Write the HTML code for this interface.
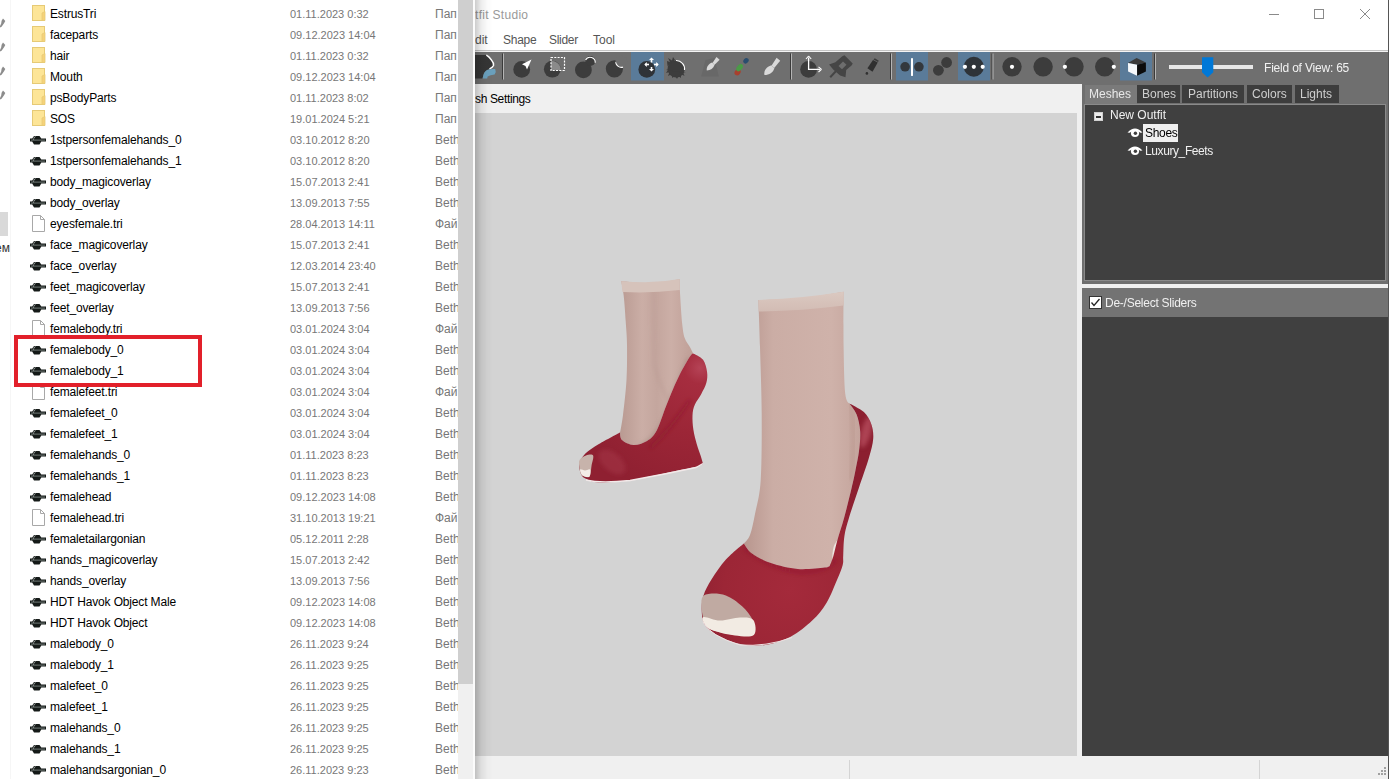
<!DOCTYPE html>
<html><head><meta charset="utf-8">
<style>
*{margin:0;padding:0;box-sizing:border-box}
html,body{width:1389px;height:779px;overflow:hidden;background:#fff;font-family:"Liberation Sans",sans-serif}
.a{position:absolute}
#os{position:absolute;left:475px;top:0;width:914px;height:779px;background:#fff;overflow:hidden}
#ex{position:absolute;left:0;top:0;width:475px;height:779px;background:#fff;overflow:hidden}
.row{position:absolute;left:0;width:458px;height:21px;font-size:12px;white-space:nowrap}
.row .n{position:absolute;left:50px;top:4px;color:#000;letter-spacing:-0.15px}
.row .d{position:absolute;left:290px;top:5px;font-size:11px;color:#777}
.row .t{position:absolute;left:435px;top:4px;color:#777;font-size:12px}
.fold{position:absolute;left:32px;top:2px}
.file{position:absolute;left:32px;top:2px}
.nif{position:absolute;left:30px;top:6px}
</style></head><body>
<div id="ex">
 <div class="a" style="left:10px;top:0;width:1px;height:779px;background:#f6f6f6"></div>
 <div class="row" style="top:3px"><svg class="fold" width="14" height="16" viewBox="0 0 14 16"><rect x="0.5" y="0.5" width="12" height="15" fill="#fde597" stroke="#e6ca76" stroke-width="1"/><path d="M10 8 L13 6.5 L13 15.5 L10 15.5 Z" fill="#f6d27a" stroke="#e6ca76" stroke-width="0.8"/></svg><span class="n">EstrusTri</span><span class="d">01.11.2023 0:32</span><span class="t">Пап</span></div>
<div class="row" style="top:24px"><svg class="fold" width="14" height="16" viewBox="0 0 14 16"><rect x="0.5" y="0.5" width="12" height="15" fill="#fde597" stroke="#e6ca76" stroke-width="1"/><path d="M10 8 L13 6.5 L13 15.5 L10 15.5 Z" fill="#f6d27a" stroke="#e6ca76" stroke-width="0.8"/></svg><span class="n">faceparts</span><span class="d">09.12.2023 14:04</span><span class="t">Пап</span></div>
<div class="row" style="top:45px"><svg class="fold" width="14" height="16" viewBox="0 0 14 16"><rect x="0.5" y="0.5" width="12" height="15" fill="#fde597" stroke="#e6ca76" stroke-width="1"/><path d="M10 8 L13 6.5 L13 15.5 L10 15.5 Z" fill="#f6d27a" stroke="#e6ca76" stroke-width="0.8"/></svg><span class="n">hair</span><span class="d">01.11.2023 0:32</span><span class="t">Пап</span></div>
<div class="row" style="top:66px"><svg class="fold" width="14" height="16" viewBox="0 0 14 16"><rect x="0.5" y="0.5" width="12" height="15" fill="#fde597" stroke="#e6ca76" stroke-width="1"/><path d="M10 8 L13 6.5 L13 15.5 L10 15.5 Z" fill="#f6d27a" stroke="#e6ca76" stroke-width="0.8"/></svg><span class="n">Mouth</span><span class="d">09.12.2023 14:04</span><span class="t">Пап</span></div>
<div class="row" style="top:87px"><svg class="fold" width="14" height="16" viewBox="0 0 14 16"><rect x="0.5" y="0.5" width="12" height="15" fill="#fde597" stroke="#e6ca76" stroke-width="1"/><path d="M10 8 L13 6.5 L13 15.5 L10 15.5 Z" fill="#f6d27a" stroke="#e6ca76" stroke-width="0.8"/></svg><span class="n">psBodyParts</span><span class="d">01.11.2023 8:02</span><span class="t">Пап</span></div>
<div class="row" style="top:108px"><svg class="fold" width="14" height="16" viewBox="0 0 14 16"><rect x="0.5" y="0.5" width="12" height="15" fill="#fde597" stroke="#e6ca76" stroke-width="1"/><path d="M10 8 L13 6.5 L13 15.5 L10 15.5 Z" fill="#f6d27a" stroke="#e6ca76" stroke-width="0.8"/></svg><span class="n">SOS</span><span class="d">19.01.2024 5:21</span><span class="t">Пап</span></div>
<div class="row" style="top:129px"><svg class="nif" width="16" height="10" viewBox="0 0 16 10"><path d="M0 3.6 L2.2 3.6 L4 0.9 L9.5 0.9 L11.3 3.6 L16 3.6 L16 6.6 L11.3 6.6 L9.5 9.6 L4 9.6 L2.2 6.6 L0 6.6 Z" fill="#151a18"/><path d="M1 5.1 L15 5.1" stroke="#9aa3a0" stroke-width="0.7"/><path d="M3.5 3 L5.5 1.6 M3.2 4.4 L4.2 3.8" stroke="#cfd6d3" stroke-width="0.8"/></svg><span class="n">1stpersonfemalehands_0</span><span class="d">03.10.2012 8:20</span><span class="t">Beth</span></div>
<div class="row" style="top:150px"><svg class="nif" width="16" height="10" viewBox="0 0 16 10"><path d="M0 3.6 L2.2 3.6 L4 0.9 L9.5 0.9 L11.3 3.6 L16 3.6 L16 6.6 L11.3 6.6 L9.5 9.6 L4 9.6 L2.2 6.6 L0 6.6 Z" fill="#151a18"/><path d="M1 5.1 L15 5.1" stroke="#9aa3a0" stroke-width="0.7"/><path d="M3.5 3 L5.5 1.6 M3.2 4.4 L4.2 3.8" stroke="#cfd6d3" stroke-width="0.8"/></svg><span class="n">1stpersonfemalehands_1</span><span class="d">03.10.2012 8:20</span><span class="t">Beth</span></div>
<div class="row" style="top:171px"><svg class="nif" width="16" height="10" viewBox="0 0 16 10"><path d="M0 3.6 L2.2 3.6 L4 0.9 L9.5 0.9 L11.3 3.6 L16 3.6 L16 6.6 L11.3 6.6 L9.5 9.6 L4 9.6 L2.2 6.6 L0 6.6 Z" fill="#151a18"/><path d="M1 5.1 L15 5.1" stroke="#9aa3a0" stroke-width="0.7"/><path d="M3.5 3 L5.5 1.6 M3.2 4.4 L4.2 3.8" stroke="#cfd6d3" stroke-width="0.8"/></svg><span class="n">body_magicoverlay</span><span class="d">15.07.2013 2:41</span><span class="t">Beth</span></div>
<div class="row" style="top:192px"><svg class="nif" width="16" height="10" viewBox="0 0 16 10"><path d="M0 3.6 L2.2 3.6 L4 0.9 L9.5 0.9 L11.3 3.6 L16 3.6 L16 6.6 L11.3 6.6 L9.5 9.6 L4 9.6 L2.2 6.6 L0 6.6 Z" fill="#151a18"/><path d="M1 5.1 L15 5.1" stroke="#9aa3a0" stroke-width="0.7"/><path d="M3.5 3 L5.5 1.6 M3.2 4.4 L4.2 3.8" stroke="#cfd6d3" stroke-width="0.8"/></svg><span class="n">body_overlay</span><span class="d">13.09.2013 7:55</span><span class="t">Beth</span></div>
<div class="row" style="top:213px"><svg class="file" width="13" height="17" viewBox="0 0 13 17"><path d="M0.5 0.5 L8.5 0.5 L12.5 4.5 L12.5 16.5 L0.5 16.5 Z" fill="#fff" stroke="#a8a8a8"/><path d="M8.5 0.5 L8.5 4.5 L12.5 4.5" fill="none" stroke="#a8a8a8"/></svg><span class="n">eyesfemale.tri</span><span class="d">28.04.2013 14:11</span><span class="t">Фай</span></div>
<div class="row" style="top:234px"><svg class="nif" width="16" height="10" viewBox="0 0 16 10"><path d="M0 3.6 L2.2 3.6 L4 0.9 L9.5 0.9 L11.3 3.6 L16 3.6 L16 6.6 L11.3 6.6 L9.5 9.6 L4 9.6 L2.2 6.6 L0 6.6 Z" fill="#151a18"/><path d="M1 5.1 L15 5.1" stroke="#9aa3a0" stroke-width="0.7"/><path d="M3.5 3 L5.5 1.6 M3.2 4.4 L4.2 3.8" stroke="#cfd6d3" stroke-width="0.8"/></svg><span class="n">face_magicoverlay</span><span class="d">15.07.2013 2:41</span><span class="t">Beth</span></div>
<div class="row" style="top:255px"><svg class="nif" width="16" height="10" viewBox="0 0 16 10"><path d="M0 3.6 L2.2 3.6 L4 0.9 L9.5 0.9 L11.3 3.6 L16 3.6 L16 6.6 L11.3 6.6 L9.5 9.6 L4 9.6 L2.2 6.6 L0 6.6 Z" fill="#151a18"/><path d="M1 5.1 L15 5.1" stroke="#9aa3a0" stroke-width="0.7"/><path d="M3.5 3 L5.5 1.6 M3.2 4.4 L4.2 3.8" stroke="#cfd6d3" stroke-width="0.8"/></svg><span class="n">face_overlay</span><span class="d">12.03.2014 23:40</span><span class="t">Beth</span></div>
<div class="row" style="top:276px"><svg class="nif" width="16" height="10" viewBox="0 0 16 10"><path d="M0 3.6 L2.2 3.6 L4 0.9 L9.5 0.9 L11.3 3.6 L16 3.6 L16 6.6 L11.3 6.6 L9.5 9.6 L4 9.6 L2.2 6.6 L0 6.6 Z" fill="#151a18"/><path d="M1 5.1 L15 5.1" stroke="#9aa3a0" stroke-width="0.7"/><path d="M3.5 3 L5.5 1.6 M3.2 4.4 L4.2 3.8" stroke="#cfd6d3" stroke-width="0.8"/></svg><span class="n">feet_magicoverlay</span><span class="d">15.07.2013 2:41</span><span class="t">Beth</span></div>
<div class="row" style="top:297px"><svg class="nif" width="16" height="10" viewBox="0 0 16 10"><path d="M0 3.6 L2.2 3.6 L4 0.9 L9.5 0.9 L11.3 3.6 L16 3.6 L16 6.6 L11.3 6.6 L9.5 9.6 L4 9.6 L2.2 6.6 L0 6.6 Z" fill="#151a18"/><path d="M1 5.1 L15 5.1" stroke="#9aa3a0" stroke-width="0.7"/><path d="M3.5 3 L5.5 1.6 M3.2 4.4 L4.2 3.8" stroke="#cfd6d3" stroke-width="0.8"/></svg><span class="n">feet_overlay</span><span class="d">13.09.2013 7:56</span><span class="t">Beth</span></div>
<div class="row" style="top:318px"><svg class="file" width="13" height="17" viewBox="0 0 13 17"><path d="M0.5 0.5 L8.5 0.5 L12.5 4.5 L12.5 16.5 L0.5 16.5 Z" fill="#fff" stroke="#a8a8a8"/><path d="M8.5 0.5 L8.5 4.5 L12.5 4.5" fill="none" stroke="#a8a8a8"/></svg><span class="n">femalebody.tri</span><span class="d">03.01.2024 3:04</span><span class="t">Фай</span></div>
<div class="row" style="top:339px"><svg class="nif" width="16" height="10" viewBox="0 0 16 10"><path d="M0 3.6 L2.2 3.6 L4 0.9 L9.5 0.9 L11.3 3.6 L16 3.6 L16 6.6 L11.3 6.6 L9.5 9.6 L4 9.6 L2.2 6.6 L0 6.6 Z" fill="#151a18"/><path d="M1 5.1 L15 5.1" stroke="#9aa3a0" stroke-width="0.7"/><path d="M3.5 3 L5.5 1.6 M3.2 4.4 L4.2 3.8" stroke="#cfd6d3" stroke-width="0.8"/></svg><span class="n">femalebody_0</span><span class="d">03.01.2024 3:04</span><span class="t">Beth</span></div>
<div class="row" style="top:360px"><svg class="nif" width="16" height="10" viewBox="0 0 16 10"><path d="M0 3.6 L2.2 3.6 L4 0.9 L9.5 0.9 L11.3 3.6 L16 3.6 L16 6.6 L11.3 6.6 L9.5 9.6 L4 9.6 L2.2 6.6 L0 6.6 Z" fill="#151a18"/><path d="M1 5.1 L15 5.1" stroke="#9aa3a0" stroke-width="0.7"/><path d="M3.5 3 L5.5 1.6 M3.2 4.4 L4.2 3.8" stroke="#cfd6d3" stroke-width="0.8"/></svg><span class="n">femalebody_1</span><span class="d">03.01.2024 3:04</span><span class="t">Beth</span></div>
<div class="row" style="top:381px"><svg class="file" width="13" height="17" viewBox="0 0 13 17"><path d="M0.5 0.5 L8.5 0.5 L12.5 4.5 L12.5 16.5 L0.5 16.5 Z" fill="#fff" stroke="#a8a8a8"/><path d="M8.5 0.5 L8.5 4.5 L12.5 4.5" fill="none" stroke="#a8a8a8"/></svg><span class="n">femalefeet.tri</span><span class="d">03.01.2024 3:04</span><span class="t">Фай</span></div>
<div class="row" style="top:402px"><svg class="nif" width="16" height="10" viewBox="0 0 16 10"><path d="M0 3.6 L2.2 3.6 L4 0.9 L9.5 0.9 L11.3 3.6 L16 3.6 L16 6.6 L11.3 6.6 L9.5 9.6 L4 9.6 L2.2 6.6 L0 6.6 Z" fill="#151a18"/><path d="M1 5.1 L15 5.1" stroke="#9aa3a0" stroke-width="0.7"/><path d="M3.5 3 L5.5 1.6 M3.2 4.4 L4.2 3.8" stroke="#cfd6d3" stroke-width="0.8"/></svg><span class="n">femalefeet_0</span><span class="d">03.01.2024 3:04</span><span class="t">Beth</span></div>
<div class="row" style="top:423px"><svg class="nif" width="16" height="10" viewBox="0 0 16 10"><path d="M0 3.6 L2.2 3.6 L4 0.9 L9.5 0.9 L11.3 3.6 L16 3.6 L16 6.6 L11.3 6.6 L9.5 9.6 L4 9.6 L2.2 6.6 L0 6.6 Z" fill="#151a18"/><path d="M1 5.1 L15 5.1" stroke="#9aa3a0" stroke-width="0.7"/><path d="M3.5 3 L5.5 1.6 M3.2 4.4 L4.2 3.8" stroke="#cfd6d3" stroke-width="0.8"/></svg><span class="n">femalefeet_1</span><span class="d">03.01.2024 3:04</span><span class="t">Beth</span></div>
<div class="row" style="top:444px"><svg class="nif" width="16" height="10" viewBox="0 0 16 10"><path d="M0 3.6 L2.2 3.6 L4 0.9 L9.5 0.9 L11.3 3.6 L16 3.6 L16 6.6 L11.3 6.6 L9.5 9.6 L4 9.6 L2.2 6.6 L0 6.6 Z" fill="#151a18"/><path d="M1 5.1 L15 5.1" stroke="#9aa3a0" stroke-width="0.7"/><path d="M3.5 3 L5.5 1.6 M3.2 4.4 L4.2 3.8" stroke="#cfd6d3" stroke-width="0.8"/></svg><span class="n">femalehands_0</span><span class="d">01.11.2023 8:23</span><span class="t">Beth</span></div>
<div class="row" style="top:465px"><svg class="nif" width="16" height="10" viewBox="0 0 16 10"><path d="M0 3.6 L2.2 3.6 L4 0.9 L9.5 0.9 L11.3 3.6 L16 3.6 L16 6.6 L11.3 6.6 L9.5 9.6 L4 9.6 L2.2 6.6 L0 6.6 Z" fill="#151a18"/><path d="M1 5.1 L15 5.1" stroke="#9aa3a0" stroke-width="0.7"/><path d="M3.5 3 L5.5 1.6 M3.2 4.4 L4.2 3.8" stroke="#cfd6d3" stroke-width="0.8"/></svg><span class="n">femalehands_1</span><span class="d">01.11.2023 8:23</span><span class="t">Beth</span></div>
<div class="row" style="top:486px"><svg class="nif" width="16" height="10" viewBox="0 0 16 10"><path d="M0 3.6 L2.2 3.6 L4 0.9 L9.5 0.9 L11.3 3.6 L16 3.6 L16 6.6 L11.3 6.6 L9.5 9.6 L4 9.6 L2.2 6.6 L0 6.6 Z" fill="#151a18"/><path d="M1 5.1 L15 5.1" stroke="#9aa3a0" stroke-width="0.7"/><path d="M3.5 3 L5.5 1.6 M3.2 4.4 L4.2 3.8" stroke="#cfd6d3" stroke-width="0.8"/></svg><span class="n">femalehead</span><span class="d">09.12.2023 14:08</span><span class="t">Beth</span></div>
<div class="row" style="top:507px"><svg class="file" width="13" height="17" viewBox="0 0 13 17"><path d="M0.5 0.5 L8.5 0.5 L12.5 4.5 L12.5 16.5 L0.5 16.5 Z" fill="#fff" stroke="#a8a8a8"/><path d="M8.5 0.5 L8.5 4.5 L12.5 4.5" fill="none" stroke="#a8a8a8"/></svg><span class="n">femalehead.tri</span><span class="d">31.10.2013 19:21</span><span class="t">Фай</span></div>
<div class="row" style="top:528px"><svg class="nif" width="16" height="10" viewBox="0 0 16 10"><path d="M0 3.6 L2.2 3.6 L4 0.9 L9.5 0.9 L11.3 3.6 L16 3.6 L16 6.6 L11.3 6.6 L9.5 9.6 L4 9.6 L2.2 6.6 L0 6.6 Z" fill="#151a18"/><path d="M1 5.1 L15 5.1" stroke="#9aa3a0" stroke-width="0.7"/><path d="M3.5 3 L5.5 1.6 M3.2 4.4 L4.2 3.8" stroke="#cfd6d3" stroke-width="0.8"/></svg><span class="n">femaletailargonian</span><span class="d">05.12.2011 2:28</span><span class="t">Beth</span></div>
<div class="row" style="top:549px"><svg class="nif" width="16" height="10" viewBox="0 0 16 10"><path d="M0 3.6 L2.2 3.6 L4 0.9 L9.5 0.9 L11.3 3.6 L16 3.6 L16 6.6 L11.3 6.6 L9.5 9.6 L4 9.6 L2.2 6.6 L0 6.6 Z" fill="#151a18"/><path d="M1 5.1 L15 5.1" stroke="#9aa3a0" stroke-width="0.7"/><path d="M3.5 3 L5.5 1.6 M3.2 4.4 L4.2 3.8" stroke="#cfd6d3" stroke-width="0.8"/></svg><span class="n">hands_magicoverlay</span><span class="d">15.07.2013 2:42</span><span class="t">Beth</span></div>
<div class="row" style="top:570px"><svg class="nif" width="16" height="10" viewBox="0 0 16 10"><path d="M0 3.6 L2.2 3.6 L4 0.9 L9.5 0.9 L11.3 3.6 L16 3.6 L16 6.6 L11.3 6.6 L9.5 9.6 L4 9.6 L2.2 6.6 L0 6.6 Z" fill="#151a18"/><path d="M1 5.1 L15 5.1" stroke="#9aa3a0" stroke-width="0.7"/><path d="M3.5 3 L5.5 1.6 M3.2 4.4 L4.2 3.8" stroke="#cfd6d3" stroke-width="0.8"/></svg><span class="n">hands_overlay</span><span class="d">13.09.2013 7:56</span><span class="t">Beth</span></div>
<div class="row" style="top:591px"><svg class="nif" width="16" height="10" viewBox="0 0 16 10"><path d="M0 3.6 L2.2 3.6 L4 0.9 L9.5 0.9 L11.3 3.6 L16 3.6 L16 6.6 L11.3 6.6 L9.5 9.6 L4 9.6 L2.2 6.6 L0 6.6 Z" fill="#151a18"/><path d="M1 5.1 L15 5.1" stroke="#9aa3a0" stroke-width="0.7"/><path d="M3.5 3 L5.5 1.6 M3.2 4.4 L4.2 3.8" stroke="#cfd6d3" stroke-width="0.8"/></svg><span class="n">HDT Havok Object Male</span><span class="d">09.12.2023 14:08</span><span class="t">Beth</span></div>
<div class="row" style="top:612px"><svg class="nif" width="16" height="10" viewBox="0 0 16 10"><path d="M0 3.6 L2.2 3.6 L4 0.9 L9.5 0.9 L11.3 3.6 L16 3.6 L16 6.6 L11.3 6.6 L9.5 9.6 L4 9.6 L2.2 6.6 L0 6.6 Z" fill="#151a18"/><path d="M1 5.1 L15 5.1" stroke="#9aa3a0" stroke-width="0.7"/><path d="M3.5 3 L5.5 1.6 M3.2 4.4 L4.2 3.8" stroke="#cfd6d3" stroke-width="0.8"/></svg><span class="n">HDT Havok Object</span><span class="d">09.12.2023 14:08</span><span class="t">Beth</span></div>
<div class="row" style="top:633px"><svg class="nif" width="16" height="10" viewBox="0 0 16 10"><path d="M0 3.6 L2.2 3.6 L4 0.9 L9.5 0.9 L11.3 3.6 L16 3.6 L16 6.6 L11.3 6.6 L9.5 9.6 L4 9.6 L2.2 6.6 L0 6.6 Z" fill="#151a18"/><path d="M1 5.1 L15 5.1" stroke="#9aa3a0" stroke-width="0.7"/><path d="M3.5 3 L5.5 1.6 M3.2 4.4 L4.2 3.8" stroke="#cfd6d3" stroke-width="0.8"/></svg><span class="n">malebody_0</span><span class="d">26.11.2023 9:24</span><span class="t">Beth</span></div>
<div class="row" style="top:654px"><svg class="nif" width="16" height="10" viewBox="0 0 16 10"><path d="M0 3.6 L2.2 3.6 L4 0.9 L9.5 0.9 L11.3 3.6 L16 3.6 L16 6.6 L11.3 6.6 L9.5 9.6 L4 9.6 L2.2 6.6 L0 6.6 Z" fill="#151a18"/><path d="M1 5.1 L15 5.1" stroke="#9aa3a0" stroke-width="0.7"/><path d="M3.5 3 L5.5 1.6 M3.2 4.4 L4.2 3.8" stroke="#cfd6d3" stroke-width="0.8"/></svg><span class="n">malebody_1</span><span class="d">26.11.2023 9:25</span><span class="t">Beth</span></div>
<div class="row" style="top:675px"><svg class="nif" width="16" height="10" viewBox="0 0 16 10"><path d="M0 3.6 L2.2 3.6 L4 0.9 L9.5 0.9 L11.3 3.6 L16 3.6 L16 6.6 L11.3 6.6 L9.5 9.6 L4 9.6 L2.2 6.6 L0 6.6 Z" fill="#151a18"/><path d="M1 5.1 L15 5.1" stroke="#9aa3a0" stroke-width="0.7"/><path d="M3.5 3 L5.5 1.6 M3.2 4.4 L4.2 3.8" stroke="#cfd6d3" stroke-width="0.8"/></svg><span class="n">malefeet_0</span><span class="d">26.11.2023 9:25</span><span class="t">Beth</span></div>
<div class="row" style="top:696px"><svg class="nif" width="16" height="10" viewBox="0 0 16 10"><path d="M0 3.6 L2.2 3.6 L4 0.9 L9.5 0.9 L11.3 3.6 L16 3.6 L16 6.6 L11.3 6.6 L9.5 9.6 L4 9.6 L2.2 6.6 L0 6.6 Z" fill="#151a18"/><path d="M1 5.1 L15 5.1" stroke="#9aa3a0" stroke-width="0.7"/><path d="M3.5 3 L5.5 1.6 M3.2 4.4 L4.2 3.8" stroke="#cfd6d3" stroke-width="0.8"/></svg><span class="n">malefeet_1</span><span class="d">26.11.2023 9:25</span><span class="t">Beth</span></div>
<div class="row" style="top:717px"><svg class="nif" width="16" height="10" viewBox="0 0 16 10"><path d="M0 3.6 L2.2 3.6 L4 0.9 L9.5 0.9 L11.3 3.6 L16 3.6 L16 6.6 L11.3 6.6 L9.5 9.6 L4 9.6 L2.2 6.6 L0 6.6 Z" fill="#151a18"/><path d="M1 5.1 L15 5.1" stroke="#9aa3a0" stroke-width="0.7"/><path d="M3.5 3 L5.5 1.6 M3.2 4.4 L4.2 3.8" stroke="#cfd6d3" stroke-width="0.8"/></svg><span class="n">malehands_0</span><span class="d">26.11.2023 9:25</span><span class="t">Beth</span></div>
<div class="row" style="top:738px"><svg class="nif" width="16" height="10" viewBox="0 0 16 10"><path d="M0 3.6 L2.2 3.6 L4 0.9 L9.5 0.9 L11.3 3.6 L16 3.6 L16 6.6 L11.3 6.6 L9.5 9.6 L4 9.6 L2.2 6.6 L0 6.6 Z" fill="#151a18"/><path d="M1 5.1 L15 5.1" stroke="#9aa3a0" stroke-width="0.7"/><path d="M3.5 3 L5.5 1.6 M3.2 4.4 L4.2 3.8" stroke="#cfd6d3" stroke-width="0.8"/></svg><span class="n">malehands_1</span><span class="d">26.11.2023 9:25</span><span class="t">Beth</span></div>
<div class="row" style="top:759px"><svg class="nif" width="16" height="10" viewBox="0 0 16 10"><path d="M0 3.6 L2.2 3.6 L4 0.9 L9.5 0.9 L11.3 3.6 L16 3.6 L16 6.6 L11.3 6.6 L9.5 9.6 L4 9.6 L2.2 6.6 L0 6.6 Z" fill="#151a18"/><path d="M1 5.1 L15 5.1" stroke="#9aa3a0" stroke-width="0.7"/><path d="M3.5 3 L5.5 1.6 M3.2 4.4 L4.2 3.8" stroke="#cfd6d3" stroke-width="0.8"/></svg><span class="n">malehandsargonian_0</span><span class="d">26.11.2023 9:23</span><span class="t">Beth</span></div>
 <div class="a" style="left:14px;top:335px;width:188px;height:52px;border:4.5px solid #e2202a"></div>
 <div class="a" style="left:0;top:212px;width:8px;height:24px;background:#d9d9d9"></div>
 <div class="a" style="left:-5px;top:241px;font-size:12px;color:#333">ем</div>
 <svg class="a" style="left:0;top:0" width="10" height="110" viewBox="0 0 10 110"><g fill="#8c8c8c"><path d="M-1 28.0 L1.2 23.5 L1.6 20.7 L3 18.5 L5.3 21.1 L4.2 23.1 L1.6 26.7 Z"/><path d="M-1 52.0 L1.2 47.5 L1.6 44.7 L3 42.5 L5.3 45.1 L4.2 47.1 L1.6 50.7 Z"/><path d="M-1 76.0 L1.2 71.5 L1.6 68.7 L3 66.5 L5.3 69.1 L4.2 71.1 L1.6 74.7 Z"/><path d="M-1 100.0 L1.2 95.5 L1.6 92.7 L3 90.5 L5.3 93.1 L4.2 95.1 L1.6 98.7 Z"/></g></svg>
 <div class="a" style="left:458px;top:0;width:15px;height:779px;background:#f0f0f0"></div><div class="a" style="left:473px;top:0;width:2px;height:779px;background:#fbfbfb"></div>
 <div class="a" style="left:458px;top:0;width:15px;height:684px;background:#cfcfcf"></div>
</div>
<div id="os">
 <div class="a" style="left:0;top:8px;font-size:12px;color:#999;letter-spacing:0.3px">tfit Studio</div>
 <div class="a" style="left:0;top:33px;font-size:12px;color:#555">dit</div>
 <div class="a" style="left:28px;top:33px;font-size:12px;color:#555;letter-spacing:-0.25px">Shape</div>
 <div class="a" style="left:74px;top:33px;font-size:12px;color:#555;letter-spacing:-0.3px">Slider</div>
 <div class="a" style="left:118px;top:33px;font-size:12px;color:#555">Tool</div>
 <div class="a" style="left:0;top:50px;width:914px;height:1px;background:#c4c4c4"></div><div class="a" style="left:0;top:51px;width:914px;height:1px;background:#f4f4f4"></div>
 <div class="a" style="left:0;top:52px;width:914px;height:32px;background:#6f6f6f"></div>
 <div class="a" style="left:0;top:84px;width:607px;height:29px;background:#f0f0f0"></div>
 <div class="a" style="left:0;top:92px;font-size:12px;color:#000;letter-spacing:-0.35px">sh Settings</div>
 <div class="a" style="left:0;top:113px;width:604px;height:644px;background:#d3d3d3"></div>
 <div class="a" style="left:602px;top:84px;width:5px;height:672px;background:#f0f0f0"></div>
 <div class="a" style="left:0;top:756px;width:914px;height:23px;background:#f0f0f0"></div>
 <!-- right panel -->
 <div class="a" style="left:607px;top:84px;width:306px;height:672px;background:#404040"></div>
 <div class="a" style="left:607px;top:84px;width:306px;height:200px;background:#6f6f6f"></div>
 <div class="a" style="left:609px;top:104px;width:302px;height:177px;background:#404040;border:1px solid #8a8a8a"></div>
 <div class="a" style="left:607px;top:284px;width:306px;height:4px;background:#f0f0f0"></div>
 <div class="a" style="left:607px;top:288px;width:306px;height:29px;background:#737373"></div>
 <div class="a" style="left:913px;top:0;width:1px;height:779px;background:#555"></div>
</div>
<svg class="a" style="left:0;top:0" width="1389" height="779" viewBox="0 0 1389 779">
<defs>
<linearGradient id="legL" x1="0" y1="0" x2="1" y2="0">
<stop offset="0" stop-color="#b99a92"/><stop offset="0.3" stop-color="#cbaea6"/><stop offset="0.5" stop-color="#c4a69e"/><stop offset="0.7" stop-color="#ccafa7"/><stop offset="1" stop-color="#bf9f97"/>
</linearGradient>
<linearGradient id="legR" x1="0" y1="0" x2="1" y2="0">
<stop offset="0" stop-color="#b8968e"/><stop offset="0.25" stop-color="#cbada5"/><stop offset="0.75" stop-color="#cfb2aa"/><stop offset="1" stop-color="#c4a49c"/>
</linearGradient>
<radialGradient id="redL" gradientUnits="userSpaceOnUse" cx="700" cy="368" r="130">
<stop offset="0" stop-color="#b54356"/><stop offset="0.12" stop-color="#a62d3f"/><stop offset="0.5" stop-color="#9c2637"/><stop offset="1" stop-color="#8f2031"/>
</radialGradient>
<radialGradient id="redR" gradientUnits="userSpaceOnUse" cx="790" cy="590" r="110">
<stop offset="0" stop-color="#a42a3b"/><stop offset="0.6" stop-color="#9c2636"/><stop offset="1" stop-color="#8c1f30"/>
</radialGradient>
<filter id="sblur" x="-20%" y="-20%" width="140%" height="140%"><feGaussianBlur stdDeviation="2.2"/></filter>
<linearGradient id="bandR" x1="0" y1="0" x2="0" y2="1"><stop offset="0" stop-color="#dbc9c1"/><stop offset="1" stop-color="#d2bcb4"/></linearGradient>
</defs>
<path d="M651.0 283.5 C660.7 283.2 679.6 279.0 679.6 279.0 C679.6 279.0 679.8 288.2 680.2 295.7 C680.6 303.2 681.5 316.8 682.2 323.9 C683.0 330.9 683.4 334.1 684.7 338.0 C686.0 341.9 688.5 344.4 689.9 347.0 C691.3 349.6 693.2 353.5 693.2 353.5 C693.2 353.5 692.0 353.1 689.4 357.3 C686.8 361.5 681.6 370.5 677.8 378.5 C673.9 386.5 669.8 396.8 666.3 405.5 C662.8 414.2 659.9 424.6 656.7 430.5 C653.5 436.4 650.9 438.6 647.0 441.0 C643.1 443.4 637.7 445.1 633.5 445.0 C629.3 444.9 624.2 442.2 622.0 440.1 C619.8 438.0 620.1 432.4 620.1 432.4 C620.1 432.4 621.9 423.7 623.0 415.0 C624.1 406.3 625.8 391.7 626.5 380.0 C627.2 368.3 627.1 354.8 627.0 345.0 C626.9 335.2 626.2 329.5 625.7 321.3 C625.2 313.1 624.5 302.4 623.7 295.7 C623.0 289.0 621.2 280.9 621.2 280.9 C621.2 280.9 641.3 283.8 651.0 283.5 Z" fill="url(#legL)"/>
<clipPath id="cpLL"><path d="M651.0 283.5 C660.7 283.2 679.6 279.0 679.6 279.0 C679.6 279.0 679.8 288.2 680.2 295.7 C680.6 303.2 681.5 316.8 682.2 323.9 C683.0 330.9 683.4 334.1 684.7 338.0 C686.0 341.9 688.5 344.4 689.9 347.0 C691.3 349.6 693.2 353.5 693.2 353.5 C693.2 353.5 692.0 353.1 689.4 357.3 C686.8 361.5 681.6 370.5 677.8 378.5 C673.9 386.5 669.8 396.8 666.3 405.5 C662.8 414.2 659.9 424.6 656.7 430.5 C653.5 436.4 650.9 438.6 647.0 441.0 C643.1 443.4 637.7 445.1 633.5 445.0 C629.3 444.9 624.2 442.2 622.0 440.1 C619.8 438.0 620.1 432.4 620.1 432.4 C620.1 432.4 621.9 423.7 623.0 415.0 C624.1 406.3 625.8 391.7 626.5 380.0 C627.2 368.3 627.1 354.8 627.0 345.0 C626.9 335.2 626.2 329.5 625.7 321.3 C625.2 313.1 624.5 302.4 623.7 295.7 C623.0 289.0 621.2 280.9 621.2 280.9 C621.2 280.9 641.3 283.8 651.0 283.5 Z"/></clipPath>
<g clip-path="url(#cpLL)" filter="url(#sblur)">
<path d="M653 290 L654 365 Q660 385 668 400" stroke="#b0918a" stroke-width="1.5" fill="none" opacity="0.6"/>
<path d="M640 447 Q660 440 672 400 L690 358" stroke="#9a8078" stroke-width="6" fill="none" opacity="0.45"/>
</g>
<path d="M621.2 280.9 Q651 284.5 679.6 279 L679.8 290 Q651 293.5 622.5 292 Z" fill="#d6c3bb"/>
<path d="M693.2 353.5 C693.2 353.5 700.8 356.7 703.1 359.8 C705.4 362.9 706.6 368.4 707.1 372.3 C707.6 376.2 707.3 379.5 706.3 383.1 C705.3 386.7 703.2 390.3 701.3 393.9 C699.4 397.5 696.3 401.1 694.8 404.7 C693.3 408.3 692.7 411.2 692.5 415.4 C692.3 419.6 692.7 425.0 693.4 429.8 C694.1 434.6 695.6 440.0 696.8 444.2 C698.0 448.4 699.3 451.7 700.4 455.0 C701.5 458.3 703.1 463.8 703.1 463.8 C703.1 463.8 701.3 465.6 695.2 467.1 C689.1 468.6 677.5 470.6 666.3 472.9 C655.1 475.1 639.0 479.0 627.8 480.6 C616.6 482.2 606.0 482.8 598.9 482.5 C591.8 482.2 588.4 480.2 585.4 478.6 C582.4 477.0 581.6 475.5 580.6 472.9 C579.6 470.3 578.8 466.4 579.6 463.2 C580.4 460.0 582.2 456.8 585.4 453.6 C588.6 450.4 593.1 447.5 598.9 444.0 C604.7 440.5 620.1 432.4 620.1 432.4 C620.1 432.4 619.8 438.0 622.0 440.1 C624.2 442.2 629.3 444.9 633.5 445.0 C637.7 445.1 643.1 443.4 647.0 441.0 C650.9 438.6 653.5 436.4 656.7 430.5 C659.9 424.6 662.8 414.2 666.3 405.5 C669.8 396.8 673.9 386.5 677.8 378.5 C681.6 370.5 686.8 361.5 689.4 357.3 C692.0 353.1 693.2 353.5 693.2 353.5 Z" fill="url(#redL)"/>
<clipPath id="cpRL"><path d="M693.2 353.5 C693.2 353.5 700.8 356.7 703.1 359.8 C705.4 362.9 706.6 368.4 707.1 372.3 C707.6 376.2 707.3 379.5 706.3 383.1 C705.3 386.7 703.2 390.3 701.3 393.9 C699.4 397.5 696.3 401.1 694.8 404.7 C693.3 408.3 692.7 411.2 692.5 415.4 C692.3 419.6 692.7 425.0 693.4 429.8 C694.1 434.6 695.6 440.0 696.8 444.2 C698.0 448.4 699.3 451.7 700.4 455.0 C701.5 458.3 703.1 463.8 703.1 463.8 C703.1 463.8 701.3 465.6 695.2 467.1 C689.1 468.6 677.5 470.6 666.3 472.9 C655.1 475.1 639.0 479.0 627.8 480.6 C616.6 482.2 606.0 482.8 598.9 482.5 C591.8 482.2 588.4 480.2 585.4 478.6 C582.4 477.0 581.6 475.5 580.6 472.9 C579.6 470.3 578.8 466.4 579.6 463.2 C580.4 460.0 582.2 456.8 585.4 453.6 C588.6 450.4 593.1 447.5 598.9 444.0 C604.7 440.5 620.1 432.4 620.1 432.4 C620.1 432.4 619.8 438.0 622.0 440.1 C624.2 442.2 629.3 444.9 633.5 445.0 C637.7 445.1 643.1 443.4 647.0 441.0 C650.9 438.6 653.5 436.4 656.7 430.5 C659.9 424.6 662.8 414.2 666.3 405.5 C669.8 396.8 673.9 386.5 677.8 378.5 C681.6 370.5 686.8 361.5 689.4 357.3 C692.0 353.1 693.2 353.5 693.2 353.5 Z"/></clipPath>
<g clip-path="url(#cpRL)" filter="url(#sblur)">
<ellipse cx="612" cy="462" rx="9" ry="16" transform="rotate(-50 612 462)" fill="#b24555" opacity="0.35"/>
<path d="M650 448 Q670 430 690 400" stroke="#85192a" stroke-width="3" fill="none" opacity="0.5"/>
</g>
<path d="M579.6 460.0 C580.7 458.1 583.8 456.2 586.0 455.5 C588.2 454.8 592.2 453.8 593.1 455.5 C594.0 457.2 592.1 462.5 591.5 466.0 C590.9 469.5 590.9 475.2 589.3 476.7 C587.6 478.2 583.2 476.4 581.6 474.8 C580.0 473.2 579.7 469.5 579.4 467.0 C579.1 464.5 578.5 461.9 579.6 460.0 Z" fill="#c7b3ab"/>
<path d="M580.2 469.5 C580.6 468.7 583.4 470.5 585.0 470.5 C586.6 470.5 589.3 468.5 590.0 469.5 C590.7 470.5 590.5 475.7 589.3 476.7 C588.0 477.7 584.0 476.7 582.5 475.5 C581.0 474.3 579.8 470.3 580.2 469.5 Z" fill="#f3ece6"/>
<path d="M586 480 Q600 483.5 630 480.5 L667 473.5 L696 467.5 L703 463.5" stroke="#f2e9e9" stroke-width="1.4" fill="none"/>
<path d="M800.0 298.5 C814.2 297.1 843.6 291.7 843.6 291.7 C843.6 291.7 843.3 329.8 843.6 346.8 C843.9 363.8 844.2 384.2 845.2 393.6 C846.2 403.0 849.3 403.4 849.3 403.4 C849.3 403.4 854.8 409.7 856.6 414.4 C858.4 419.1 859.8 425.4 860.2 431.5 C860.6 437.6 859.8 444.6 859.0 451.0 C858.2 457.4 856.7 463.9 855.5 470.0 C854.3 476.1 853.6 479.8 851.7 487.6 C849.9 495.4 846.8 507.9 844.4 516.8 C842.0 525.7 838.9 534.7 837.1 541.2 C835.3 547.7 834.6 551.8 833.4 555.9 C832.2 560.0 829.8 565.6 829.8 565.6 C829.8 565.6 830.1 566.9 824.8 567.5 C819.5 568.1 806.8 569.7 797.8 569.0 C788.8 568.3 778.5 565.7 770.9 563.1 C763.3 560.5 756.5 556.8 752.0 553.5 C747.5 550.2 743.9 543.4 743.9 543.4 C743.9 543.4 748.1 539.9 750.0 535.0 C751.9 530.1 753.2 523.1 755.0 514.0 C756.8 504.9 759.6 497.2 760.7 480.5 C761.8 463.8 761.8 435.9 761.7 413.6 C761.6 391.3 760.5 365.7 760.0 346.8 C759.5 327.9 758.4 300.0 758.4 300.0 C758.4 300.0 785.8 299.9 800.0 298.5 Z" fill="url(#legR)"/>
<clipPath id="cpLR"><path d="M800.0 298.5 C814.2 297.1 843.6 291.7 843.6 291.7 C843.6 291.7 843.3 329.8 843.6 346.8 C843.9 363.8 844.2 384.2 845.2 393.6 C846.2 403.0 849.3 403.4 849.3 403.4 C849.3 403.4 854.8 409.7 856.6 414.4 C858.4 419.1 859.8 425.4 860.2 431.5 C860.6 437.6 859.8 444.6 859.0 451.0 C858.2 457.4 856.7 463.9 855.5 470.0 C854.3 476.1 853.6 479.8 851.7 487.6 C849.9 495.4 846.8 507.9 844.4 516.8 C842.0 525.7 838.9 534.7 837.1 541.2 C835.3 547.7 834.6 551.8 833.4 555.9 C832.2 560.0 829.8 565.6 829.8 565.6 C829.8 565.6 830.1 566.9 824.8 567.5 C819.5 568.1 806.8 569.7 797.8 569.0 C788.8 568.3 778.5 565.7 770.9 563.1 C763.3 560.5 756.5 556.8 752.0 553.5 C747.5 550.2 743.9 543.4 743.9 543.4 C743.9 543.4 748.1 539.9 750.0 535.0 C751.9 530.1 753.2 523.1 755.0 514.0 C756.8 504.9 759.6 497.2 760.7 480.5 C761.8 463.8 761.8 435.9 761.7 413.6 C761.6 391.3 760.5 365.7 760.0 346.8 C759.5 327.9 758.4 300.0 758.4 300.0 C758.4 300.0 785.8 299.9 800.0 298.5 Z"/></clipPath>
<g clip-path="url(#cpLR)" filter="url(#sblur)">
<path d="M850 400 Q857 440 850 480" stroke="#b39188" stroke-width="5" fill="none" opacity="0.4"/>

</g>
<path d="M758.4 300 Q800 298.5 843.6 291.7 L843.8 305.5 Q800 311 758.7 311.5 Z" fill="url(#bandR)"/>
<path d="M833.6 547.0 C834.6 543.6 837.2 539.7 838.2 540.5 C839.2 541.3 839.6 548.4 839.5 552.0 C839.4 555.6 838.7 560.5 837.5 562.0 C836.3 563.5 833.1 563.5 832.5 561.0 C831.9 558.5 832.6 550.4 833.6 547.0 Z" fill="#ece4df"/>
<path d="M849.3 403.4 C849.3 403.4 860.2 408.6 863.9 412.0 C867.5 415.4 869.7 419.6 871.2 424.1 C872.8 428.6 873.6 433.1 873.2 438.8 C872.8 444.5 871.2 450.2 868.8 458.3 C866.4 466.4 862.2 477.9 859.0 487.6 C855.8 497.4 851.7 508.7 849.3 516.8 C846.9 524.9 845.4 529.8 844.4 536.3 C843.4 542.8 843.5 551.1 843.2 555.9 C842.9 560.7 843.7 561.1 842.7 565.0 C841.7 568.9 840.0 573.0 837.3 579.3 C834.6 585.6 830.8 595.8 826.6 602.7 C822.4 609.6 818.2 614.9 812.2 620.6 C806.2 626.3 798.4 632.8 790.6 636.8 C782.8 640.8 773.9 643.7 765.5 644.9 C757.1 646.1 748.4 645.6 740.3 644.0 C732.2 642.4 723.0 638.3 717.0 635.0 C711.0 631.7 706.9 628.4 704.4 624.2 C701.9 620.0 701.9 614.6 701.7 609.8 C701.6 605.0 701.9 600.6 703.5 595.5 C705.1 590.4 707.9 585.3 711.6 579.3 C715.3 573.3 720.5 565.5 725.9 559.5 C731.3 553.5 743.9 543.4 743.9 543.4 C743.9 543.4 747.5 550.2 752.0 553.5 C756.5 556.8 763.3 560.5 770.9 563.1 C778.5 565.7 788.8 568.3 797.8 569.0 C806.8 569.7 819.5 568.1 824.8 567.5 C830.1 566.9 829.8 565.6 829.8 565.6 C829.8 565.6 832.2 560.0 833.4 555.9 C834.6 551.8 835.3 547.7 837.1 541.2 C838.9 534.7 842.0 525.7 844.4 516.8 C846.8 507.9 849.9 495.4 851.7 487.6 C853.6 479.8 854.3 476.1 855.5 470.0 C856.7 463.9 858.2 457.4 859.0 451.0 C859.8 444.6 860.6 437.6 860.2 431.5 C859.8 425.4 858.4 419.1 856.6 414.4 C854.8 409.7 849.3 403.4 849.3 403.4 Z" fill="url(#redR)"/>
<clipPath id="cpRR"><path d="M849.3 403.4 C849.3 403.4 860.2 408.6 863.9 412.0 C867.5 415.4 869.7 419.6 871.2 424.1 C872.8 428.6 873.6 433.1 873.2 438.8 C872.8 444.5 871.2 450.2 868.8 458.3 C866.4 466.4 862.2 477.9 859.0 487.6 C855.8 497.4 851.7 508.7 849.3 516.8 C846.9 524.9 845.4 529.8 844.4 536.3 C843.4 542.8 843.5 551.1 843.2 555.9 C842.9 560.7 843.7 561.1 842.7 565.0 C841.7 568.9 840.0 573.0 837.3 579.3 C834.6 585.6 830.8 595.8 826.6 602.7 C822.4 609.6 818.2 614.9 812.2 620.6 C806.2 626.3 798.4 632.8 790.6 636.8 C782.8 640.8 773.9 643.7 765.5 644.9 C757.1 646.1 748.4 645.6 740.3 644.0 C732.2 642.4 723.0 638.3 717.0 635.0 C711.0 631.7 706.9 628.4 704.4 624.2 C701.9 620.0 701.9 614.6 701.7 609.8 C701.6 605.0 701.9 600.6 703.5 595.5 C705.1 590.4 707.9 585.3 711.6 579.3 C715.3 573.3 720.5 565.5 725.9 559.5 C731.3 553.5 743.9 543.4 743.9 543.4 C743.9 543.4 747.5 550.2 752.0 553.5 C756.5 556.8 763.3 560.5 770.9 563.1 C778.5 565.7 788.8 568.3 797.8 569.0 C806.8 569.7 819.5 568.1 824.8 567.5 C830.1 566.9 829.8 565.6 829.8 565.6 C829.8 565.6 832.2 560.0 833.4 555.9 C834.6 551.8 835.3 547.7 837.1 541.2 C838.9 534.7 842.0 525.7 844.4 516.8 C846.8 507.9 849.9 495.4 851.7 487.6 C853.6 479.8 854.3 476.1 855.5 470.0 C856.7 463.9 858.2 457.4 859.0 451.0 C859.8 444.6 860.6 437.6 860.2 431.5 C859.8 425.4 858.4 419.1 856.6 414.4 C854.8 409.7 849.3 403.4 849.3 403.4 Z"/></clipPath>
<g clip-path="url(#cpRR)" filter="url(#sblur)">
<ellipse cx="866" cy="432" rx="5" ry="16" transform="rotate(15 866 432)" fill="#bb5362" opacity="0.7"/>
<path d="M745 548 Q770 568 800 572 Q825 572 836 560" stroke="#84192b" stroke-width="3" fill="none" opacity="0.45"/>

</g>
<path d="M701.7 599.0 C702.8 594.8 705.8 594.3 709.8 593.7 C713.8 593.1 720.5 593.4 725.9 595.5 C731.3 597.6 737.6 602.1 742.1 606.3 C746.6 610.5 751.0 615.8 752.9 620.6 C754.8 625.4 753.8 635.0 753.8 635.0 C753.8 635.0 741.9 635.9 734.9 635.0 C727.9 634.1 716.8 632.3 711.6 629.6 C706.4 626.9 705.1 623.9 703.5 618.8 C701.9 613.7 700.7 603.2 701.7 599.0 Z" fill="#c0aaa2"/>
<path d="M703.5 617.0 C706.1 616.4 713.9 620.4 720.0 620.5 C726.1 620.6 734.5 617.6 740.0 617.5 C745.5 617.4 751.0 617.1 753.3 620.0 C755.6 622.9 756.9 632.4 753.8 635.0 C750.7 637.6 741.9 636.3 734.9 635.5 C727.9 634.7 716.7 631.9 711.6 630.0 C706.5 628.1 705.9 626.2 704.5 624.0 C703.1 621.8 700.9 617.6 703.5 617.0 Z" fill="#f2ebe3"/>
<path d="M703 622 Q710 636 740 645 Q766 647 792 637.5" stroke="#efe2e2" stroke-width="1" fill="none"/>
</svg>
<svg class="a" style="left:0;top:0" width="1389" height="779" viewBox="0 0 1389 779">
<defs>
<filter id="blur1" x="-50%" y="-50%" width="200%" height="200%"><feGaussianBlur stdDeviation="0.7"/></filter>
<clipPath id="tbclip"><rect x="475" y="52" width="914" height="32"/></clipPath>
</defs>
<g clip-path="url(#tbclip)">
<!-- icon 0 partially hidden -->
<path d="M474 55 L487 55 Q493 59 493.8 63.5 Q494 66 490 68.5 Q486 70 484 73 L482.5 78.5 L474 78.5 Z" fill="#353535"/>
<path d="M486.8 55.3 Q489 56.5 491.5 60 Q494 63 493.5 65.5 Q492.5 67.5 490 68.6" stroke="#fff" stroke-width="1.5" fill="none" stroke-linecap="round"/>
<path d="M482.6 78.4 Q483.5 72 487 70 Q491 68.6 495.2 69 Q496.5 71.5 494.6 74.5 Q490 75.2 487.6 76.5 L487.2 78.4 Z" fill="#6aa0bd"/>
<!-- separators -->
<rect x="502" y="53.5" width="1" height="26" fill="#3a3a3a"/><rect x="503" y="53.5" width="1" height="26" fill="#b5b5b5"/>
<rect x="790" y="53.5" width="1" height="26" fill="#3a3a3a"/><rect x="791" y="53.5" width="1" height="26" fill="#b5b5b5"/>
<rect x="890" y="53.5" width="1" height="26" fill="#3a3a3a"/><rect x="891" y="53.5" width="1" height="26" fill="#b5b5b5"/>
<rect x="991.5" y="53.5" width="1" height="26" fill="#3a3a3a"/><rect x="992.5" y="53.5" width="1" height="26" fill="#b5b5b5"/>
<rect x="1154" y="53.5" width="1" height="26" fill="#3a3a3a"/><rect x="1155" y="53.5" width="1" height="26" fill="#b5b5b5"/>
<!-- highlights -->
<rect x="631" y="52" width="33" height="28.5" fill="#5a7b99"/>
<rect x="896" y="52" width="32" height="28.5" fill="#5a7b99"/>
<rect x="958" y="52" width="32" height="28.5" fill="#5a7b99"/>
<rect x="1120" y="52" width="32" height="28.5" fill="#5a7b99"/>
<!-- 1 select arrow -->
<circle cx="521.7" cy="69.4" r="8.4" fill="#3c3c3c"/>
<path d="M522 64.3 L531.5 59.5 L527 69.5 L525.5 66 Z" fill="#fff"/>
<!-- 2 box select -->
<circle cx="552.3" cy="69.2" r="8.4" fill="#3c3c3c"/>
<path d="M551 70.5 L551 60.8 A9 9 0 0 1 560.7 70.5 Z" fill="#8a8a8a"/>
<rect x="551" y="57.5" width="13.5" height="13" fill="none" stroke="#fff" stroke-width="1.2" stroke-dasharray="2 1.3"/>
<!-- 3 circle with small circle -->
<circle cx="583.4" cy="69.9" r="8.4" fill="#3c3c3c"/>
<circle cx="590.3" cy="61" r="5" fill="#3c3c3c"/>
<path d="M585.6 60 A5.1 5.1 0 0 1 595.2 62.8" stroke="#fff" stroke-width="1.1" fill="none"/>
<!-- 4 circle bite -->
<circle cx="614.4" cy="68.8" r="8.6" fill="#3c3c3c"/>
<circle cx="621.3" cy="61.5" r="5.8" fill="#6f6f6f"/>
<path d="M615.6 62.3 A5.8 5.8 0 0 0 623 67.1" stroke="#fff" stroke-width="1.1" fill="none"/>
<!-- 5 move -->
<circle cx="646.8" cy="69.4" r="8.4" fill="#2f3338"/>
<g stroke="#fff" stroke-width="1.6" fill="none">
<path d="M651.5 59 L651.5 62.5"/><path d="M654 64.5 L658 64.5"/><path d="M645 64.5 L649 64.5"/><path d="M651.5 67 L651.5 70"/>
</g>
<g fill="#fff">
<path d="M651.5 57.5 L649 60 L654 60 Z"/><path d="M658.7 64.5 L656.2 62 L656.2 67 Z"/><path d="M644.3 64.5 L646.8 62 L646.8 67 Z"/><path d="M651.5 71.5 L649 69 L654 69 Z"/>
</g>
<!-- 6 spiky smooth -->
<g fill="#3c3c3c">
<circle cx="676.2" cy="68.8" r="8.6"/>
<path d="M667 61 L670 62 L668 58 L672 60.5 L673 57 L675 60 L667.5 66 Z"/>
<path d="M666 70 L668.5 69 L666 73 L669.5 72 L668 76 L672 74 L672 78 L675 75.5 L677 79 L678.5 76 L681 78 L681 74 L684.5 76 L683 72 L686 73 Z"/>
</g>
<path d="M676 60.5 A8.3 8.3 0 0 1 684.5 70" stroke="#fff" stroke-width="1.1" fill="none"/>
<!-- 7 mask brush -->
<path d="M705.5 60 L714.5 58 L718.8 76.5 L701.2 76.5 Z" fill="#686868"/>
<path d="M706.8 70.6 C706.2 67 708.5 64 712.2 62.6 L714.5 65 C713.4 68.3 710.6 70.2 706.8 70.6 Z" fill="#d9d9d9"/>
<path d="M712.6 62.8 L716.5 57 L719.6 59.8 L714.4 65 Z" fill="#d9d9d9"/>
<!-- 8 color brush -->
<g filter="url(#blur1)">
<ellipse cx="737.6" cy="72.2" rx="2.8" ry="3.4" transform="rotate(40 737.6 72.2)" fill="#a8402f"/>
<ellipse cx="739.6" cy="67.6" rx="2.6" ry="4.2" transform="rotate(40 739.6 67.6)" fill="#4c9a47"/>
<ellipse cx="746" cy="60.8" rx="2.4" ry="3" transform="rotate(40 746 60.8)" fill="#2a4d6e"/>
</g>
<!-- 9 white brush -->
<path d="M764.4 75 C763.6 70.5 766.6 66.6 771.4 65.2 L774.4 68.2 C773 72.6 769.4 74.8 764.4 75 Z" fill="#d9d9d9"/>
<path d="M771.6 65.4 L776.6 57.8 L780.2 60.8 L774.2 68 Z" fill="#d9d9d9"/>
<!-- 10 axes -->
<circle cx="808.6" cy="69.4" r="8.4" fill="#3c3c3c"/>
<path d="M808.6 57.5 L808.6 69.4 L820 69.4" stroke="#fff" stroke-width="1.3" fill="none"/>
<path d="M808.6 56 L806 59 M808.6 56 L811.2 59 M821.5 69.4 L818.5 66.8 M821.5 69.4 L818.5 72" stroke="#fff" stroke-width="1.1" fill="none"/>
<!-- 11 pin -->
<path d="M830.2 77.3 L836.3 70.8" stroke="#454545" stroke-width="2"/>
<path d="M829.1 64.4 L835.4 62.2 L842.3 56.2 L844.5 55.3 L852.7 63.5 L851.8 65.2 L846.2 70 L845.5 77.3 L840.1 75.6 L833.2 69.6 Z" fill="#454545"/>
<path d="M838.5 66 L843 61.5 L846.5 64.8 L842 69.3 Z" fill="#6d6d6d"/>
<!-- 12 pencil -->
<path d="M867.4 68.3 L873 60 L877.7 62.6 L872.5 71.7 Z" fill="#303030"/>
<path d="M873.5 59.5 L874.8 58.2 L878.8 60.7 L878 62" fill="#3a3a3a"/>
<circle cx="866.9" cy="73.4" r="1.3" fill="#303030"/>
<!-- 13 symmetric -->
<circle cx="905.1" cy="66.8" r="4.8" fill="#33383d"/>
<circle cx="918.9" cy="66.8" r="4.8" fill="#33383d"/>
<rect x="911" y="58.2" width="2" height="17.7" fill="#fff"/>
<!-- 14 two circles -->
<circle cx="946.6" cy="62.5" r="5.4" fill="#3c3c3c"/>
<circle cx="938.4" cy="70.3" r="5.4" fill="#3c3c3c"/>
<!-- 15 three dots -->
<circle cx="973.8" cy="66.8" r="10" fill="#2e3338"/>
<circle cx="964.9" cy="66.8" r="2.1" fill="#fff"/><circle cx="973.8" cy="66.8" r="2.1" fill="#fff"/><circle cx="982.7" cy="66.8" r="2.1" fill="#fff"/>
<!-- 16-19 circles -->
<circle cx="1012" cy="66.8" r="9.7" fill="#3c3c3c"/><circle cx="1012" cy="66.8" r="2.1" fill="#fff"/>
<circle cx="1043.1" cy="66.8" r="9.7" fill="#3c3c3c"/>
<circle cx="1074" cy="66.8" r="9.7" fill="#3c3c3c"/><circle cx="1064.9" cy="66.8" r="2.1" fill="#fff"/>
<circle cx="1104.7" cy="66.8" r="9.7" fill="#3c3c3c"/><circle cx="1113.8" cy="66.8" r="2.1" fill="#fff"/>
<!-- cube -->
<path d="M1128 63 L1136.6 58.1 L1145.9 62.4 L1137.1 64.8 Z" fill="#3a3a3a"/>
<path d="M1128 63 L1137.1 64.8 L1137.1 75.7 L1128.1 71.4 Z" fill="#f5f8fb"/>
<path d="M1137.1 64.8 L1145.9 62.4 L1145.9 71.4 L1137.1 75.7 Z" fill="#0c0c0c"/>
<!-- slider -->
<rect x="1169" y="65" width="84" height="4" fill="#e7e7e7"/>
<path d="M1202 57.2 L1213.3 57.2 L1213.3 72.3 L1207.6 77.4 L1202 72.3 Z" fill="#0078d7"/>
</g>
</svg>
<div class="a" style="left:1264px;top:61px;font-size:12px;color:#f2f2f2;white-space:nowrap;letter-spacing:-0.2px">Field of View: 65</div>

<div class="a" style="left:475px;top:0;width:18px;height:779px;background:linear-gradient(to right,rgba(0,0,0,0.2),rgba(0,0,0,0.07) 35%,rgba(0,0,0,0.015) 70%,rgba(0,0,0,0))"></div>
<svg class="a" style="left:1260px;top:0" width="129" height="30" viewBox="0 0 129 30">
 <g stroke="#8a8a8a" stroke-width="1" fill="none">
 <path d="M9 14.5 L19 14.5"/><rect x="54.5" y="9.5" width="9" height="9"/><path d="M100 9 L110 19 M110 9 L100 19"/>
 </g>
</svg>
<div class="a" style="left:849px;top:760px;width:1px;height:19px;background:#d4d4d4"></div>
<div class="a" style="left:1259px;top:760px;width:1px;height:19px;background:#d4d4d4"></div>
<svg class="a" style="left:1376px;top:765px" width="12" height="12" viewBox="0 0 12 12"><g fill="#a0a0a0"><rect x="8" y="2" width="2" height="2"/><rect x="5" y="5" width="2" height="2"/><rect x="8" y="5" width="2" height="2"/><rect x="2" y="8" width="2" height="2"/><rect x="5" y="8" width="2" height="2"/><rect x="8" y="8" width="2" height="2"/></g></svg>
<div class="a" style="left:1085px;top:85px;width:52px;height:19px;background:#7a7a7a"></div>
<div class="a" style="left:1137px;top:85px;width:43px;height:18px;background:#3d3d3d"></div>
<div class="a" style="left:1182px;top:85px;width:62px;height:18px;background:#3d3d3d"></div>
<div class="a" style="left:1247px;top:85px;width:45px;height:18px;background:#3d3d3d"></div>
<div class="a" style="left:1295px;top:85px;width:44px;height:18px;background:#3d3d3d"></div>
<div class="a" style="left:1089px;top:87px;font-size:12px;color:#e8e8e8">Meshes</div>
<div class="a" style="left:1142px;top:87px;font-size:12px;color:#cfcfcf">Bones</div>
<div class="a" style="left:1188px;top:87px;font-size:12px;color:#cfcfcf">Partitions</div>
<div class="a" style="left:1252px;top:87px;font-size:12px;color:#cfcfcf">Colors</div>
<div class="a" style="left:1300px;top:87px;font-size:12px;color:#cfcfcf">Lights</div>
<div class="a" style="left:1094px;top:112px;width:9px;height:9px;background:#ececec;border:1px solid #d0d0d0"></div>
<div class="a" style="left:1096px;top:116px;width:5px;height:1.5px;background:#333"></div>
<div class="a" style="left:1110px;top:108px;font-size:12px;color:#f0f0f0">New Outfit</div>
<div class="a" style="left:1143px;top:124px;width:35px;height:18px;background:#f0f0f0"></div>
<div class="a" style="left:1145px;top:126px;font-size:12px;color:#000;letter-spacing:-0.3px">Shoes</div>
<div class="a" style="left:1145px;top:144px;font-size:12px;color:#f0f0f0;letter-spacing:-0.4px">Luxury_Feets</div>
<svg class="a" style="left:1127px;top:126px" width="16" height="12" viewBox="0 0 16 12"><path d="M0.5 6.5 Q8 -1.5 15.5 6.5 L13.3 6.8 Q8 2 2.7 6.8 Z" fill="#fff"/><circle cx="8" cy="7" r="4.1" fill="#fff"/><circle cx="8.4" cy="7.2" r="1.7" fill="#404040"/></svg>
<svg class="a" style="left:1127px;top:144px" width="16" height="12" viewBox="0 0 16 12"><path d="M0.5 6.5 Q8 -1.5 15.5 6.5 L13.3 6.8 Q8 2 2.7 6.8 Z" fill="#fff"/><circle cx="8" cy="7" r="4.1" fill="#fff"/><circle cx="8.4" cy="7.2" r="1.7" fill="#404040"/></svg>
<div class="a" style="left:1089px;top:296px;width:13px;height:13px;background:#fff;border:1px solid #333"></div>
<svg class="a" style="left:1089px;top:296px" width="13" height="13" viewBox="0 0 13 13"><path d="M2.5 6.5 L5 9.5 L10.5 3" stroke="#222" stroke-width="1.3" fill="none"/></svg>
<div class="a" style="left:1105px;top:296px;font-size:12px;color:#f0f0f0;letter-spacing:-0.25px">De-/Select Sliders</div>

</body></html>
